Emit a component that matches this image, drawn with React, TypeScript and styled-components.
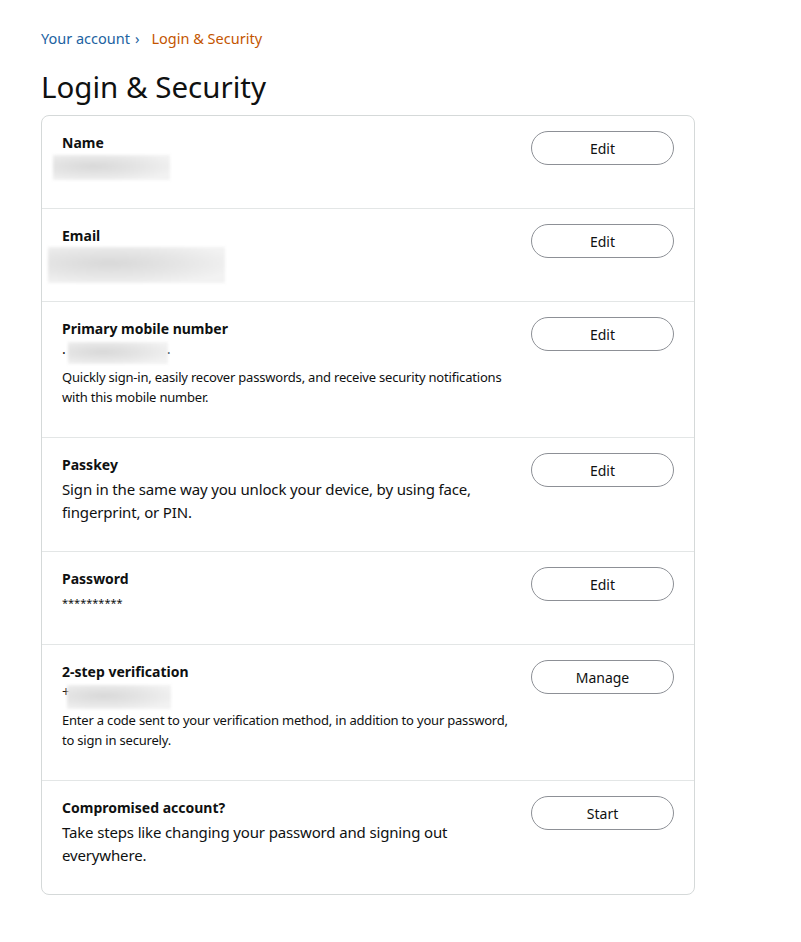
import type { FC, ReactNode } from "react";
import styled, { createGlobalStyle } from "styled-components";

interface Smudge {
  left: number;
  top: number;
  width: number;
  height: number;
}

interface Setting {
  title: string;
  value?: ReactNode;
  masked?: boolean;
  smudge?: Smudge;
  note?: string;
  detail?: string;
  action: string;
}

// built lazily, the styled parts are declared further down
const getSettings = (): Setting[] => [
  {
    title: "Name",
    value: "\u00a0",
    smudge: { left: -9, top: 2, width: 117, height: 25 },
    action: "Edit",
  },
  {
    title: "Email",
    value: "\u00a0",
    smudge: { left: -14, top: 1, width: 177, height: 36 },
    action: "Edit",
  },
  {
    title: "Primary mobile number",
    value: (
      <>
        .<Spacer />.
      </>
    ),
    smudge: { left: 6, top: 3, width: 100, height: 22 },
    note: "Quickly sign-in, easily recover passwords, and receive security notifications with this mobile number.",
    action: "Edit",
  },
  {
    title: "Passkey",
    detail: "Sign in the same way you unlock your device, by using face, fingerprint, or PIN.",
    action: "Edit",
  },
  {
    title: "Password",
    value: "**********",
    masked: true,
    action: "Edit",
  },
  {
    title: "2-step verification",
    value: "+",
    smudge: { left: 5, top: 3, width: 104, height: 24 },
    note: "Enter a code sent to your verification method, in addition to your password, to sign in securely.",
    action: "Manage",
  },
  {
    title: "Compromised account?",
    detail: "Take steps like changing your password and signing out everywhere.",
    action: "Start",
  },
];

const App: FC = () => {
  const settings = getSettings();

  return (
    <>
      <GlobalStyle />
      <Page>
        <Breadcrumb>
          <CrumbLink>Your account</CrumbLink>
          <CrumbSep>›</CrumbSep>
          <CrumbCurrent>Login &amp; Security</CrumbCurrent>
        </Breadcrumb>
        <Heading>Login &amp; Security</Heading>
        <Card>
          {settings.map((s) => (
            <Row key={s.title}>
              <Info>
                <Title>{s.title}</Title>
                {s.value && (
                  <Value $masked={s.masked}>
                    {s.value}
                    {s.smudge && (
                      <Blur
                        $left={s.smudge.left}
                        $top={s.smudge.top}
                        $width={s.smudge.width}
                        $height={s.smudge.height}
                      />
                    )}
                  </Value>
                )}
                {s.note && <Note>{s.note}</Note>}
                {s.detail && <Detail>{s.detail}</Detail>}
              </Info>
              <ActionButton type="button">{s.action}</ActionButton>
            </Row>
          ))}
        </Card>
      </Page>
    </>
  );
};

export default App;

const GlobalStyle = createGlobalStyle`
  html, body {
    margin: 0;
    padding: 0;
    background: #ffffff;
  }
  body {
    font-family: "Noto Sans", "DejaVu Sans", sans-serif;
    color: #0f1111;
  }
`;

const Page = styled.div`
  width: 654px;
  padding: 28px 0 40px 41px;
`;

const Breadcrumb = styled.nav`
  display: flex;
  align-items: baseline;
  font-size: 14.5px;
  line-height: 20px;
`;

const CrumbLink = styled.span`
  color: #2162a1;
`;

const CrumbSep = styled.span`
  color: #2162a1;
  margin: 0 12px 0 5px;
`;

const CrumbCurrent = styled.span`
  color: #c45500;
`;

const Heading = styled.h1`
  margin: 21px 0 10px;
  font-size: 29.5px;
  line-height: 36px;
  font-weight: 400;
  color: #0f1111;
`;

const Card = styled.div`
  border: 1px solid #d5d9d9;
  border-radius: 8px;
  overflow: hidden;
`;

const Row = styled.div`
  display: flex;
  justify-content: space-between;
  align-items: flex-start;
  gap: 12px;
  padding: 15px 20px 27px;

  & + & {
    border-top: 1px solid #e3e6e6;
  }
`;

const Info = styled.div`
  flex: 1;
  min-width: 0;
  padding-top: 2px;
`;

const Title = styled.div`
  font-size: 14px;
  line-height: 20px;
  font-weight: 700;
`;

const Value = styled.div<{ $masked?: boolean }>`
  position: relative;
  font-size: ${({ $masked }) => ($masked ? "11px" : "14px")};
  line-height: 20px;
  padding-top: ${({ $masked }) => ($masked ? "4px" : "0")};
  margin-bottom: ${({ $masked }) => ($masked ? "4px" : "8px")};
`;

const Spacer = styled.span`
  display: inline-block;
  width: 101px;
`;

const Blur = styled.span<{ $left: number; $top: number; $width: number; $height: number }>`
  position: absolute;
  left: ${({ $left }) => $left}px;
  top: ${({ $top }) => $top}px;
  width: ${({ $width }) => $width}px;
  height: ${({ $height }) => $height}px;
  background: radial-gradient(ellipse at 35% 45%, #d8d8d8 0%, #e6e6e6 45%, #f2f2f2 80%);
  filter: blur(1.5px);
`;

const Note = styled.div`
  font-size: 13px;
  line-height: 20px;
  letter-spacing: -0.2px;
  margin-bottom: 3px;
`;

const Detail = styled.div`
  font-size: 15px;
  line-height: 22.5px;
  letter-spacing: -0.15px;
  margin: 3px 0 1px;
`;

const ActionButton = styled.button`
  flex-shrink: 0;
  width: 143px;
  height: 34px;
  padding: 0;
  border: 1px solid #8d9096;
  border-radius: 100px;
  background: #ffffff;
  font-family: inherit;
  font-size: 14px;
  color: #0f1111;
  cursor: pointer;
`;
